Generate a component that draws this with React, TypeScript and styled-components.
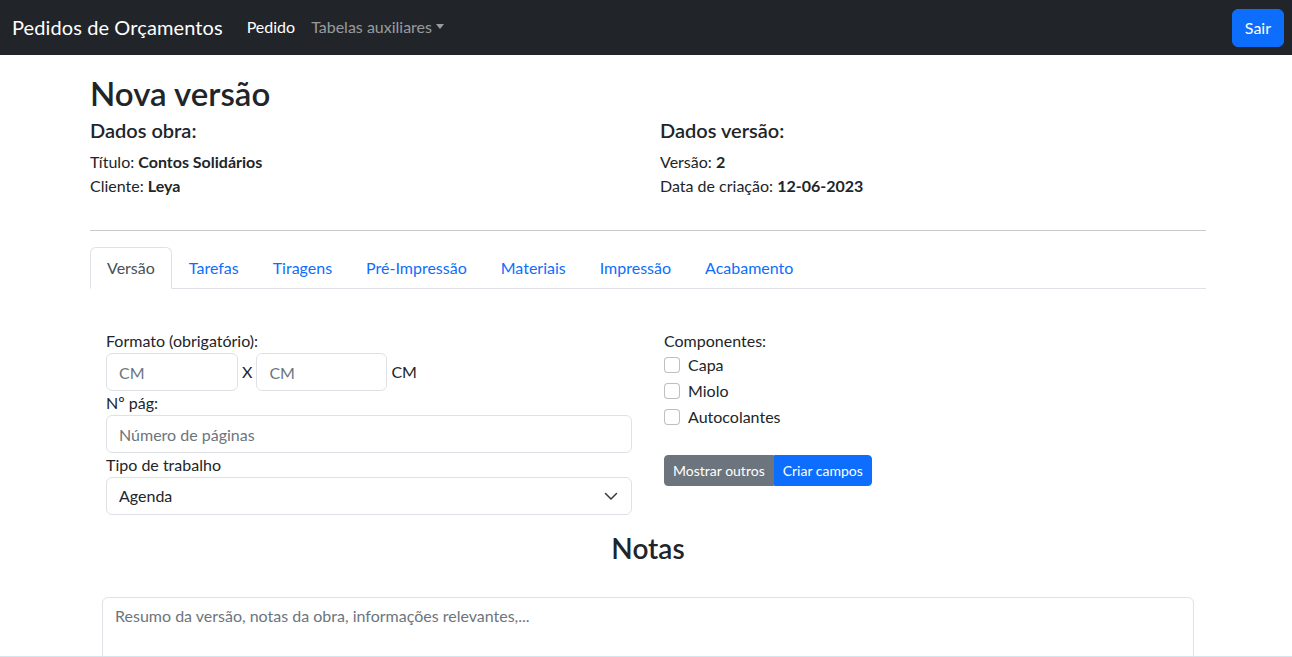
import React from 'react';
import styled, { createGlobalStyle } from 'styled-components';

const GlobalStyle = createGlobalStyle`
  html, body {
    margin: 0;
    padding: 0;
    height: 100%;
    overflow: hidden;
    background: #fff;
  }
  body {
    font-family: Lato, "Open Sans", "Liberation Sans", sans-serif;
    font-size: 16px;
    line-height: 1.5;
    color: #212529;
  }
  * {
    box-sizing: border-box;
  }
`;

const tabs = ['Versão', 'Tarefas', 'Tiragens', 'Pré-Impressão', 'Materiais', 'Impressão', 'Acabamento'];
const componentes = ['Capa', 'Miolo', 'Autocolantes'];

const App: React.FC = () => {
  return (
    <>
      <GlobalStyle />
      {/* barra de navegação */}
      <Navbar>
        <NavLeft>
          <Brand>Pedidos de Orçamentos</Brand>
          <NavLink $active>Pedido</NavLink>
          <NavLink>
            Tabelas auxiliares<Caret />
          </NavLink>
        </NavLeft>
        <Button $variant="primary">Sair</Button>
      </Navbar>

      <Container>
        <Title>Nova versão</Title>

        <InfoRow>
          <div>
            <SubTitle>Dados obra:</SubTitle>
            <InfoLine>Título: <b>Contos Solidários</b></InfoLine>
            <InfoLine>Cliente: <b>Leya</b></InfoLine>
          </div>
          <div>
            <SubTitle>Dados versão:</SubTitle>
            <InfoLine>Versão: <b>2</b></InfoLine>
            <InfoLine>Data de criação: <b>12-06-2023</b></InfoLine>
          </div>
        </InfoRow>

        <Divider />

        <Tabs>
          {tabs.map((t, i) => (
            <Tab key={t} $active={i === 0}>{t}</Tab>
          ))}
        </Tabs>

        <FormRow>
          <FormCol>
            <Label>Formato (obrigatório):</Label>
            <SizeRow>
              <Input placeholder="CM" $width={132} />
              <Unit>X</Unit>
              <Input placeholder="CM" $width={131} />
              <Unit>CM</Unit>
            </SizeRow>
            <Label>Nº pág:</Label>
            <Input placeholder="Número de páginas" />
            <Label>Tipo de trabalho</Label>
            <Select>
              <span>Agenda</span>
              <svg width="16" height="16" viewBox="0 0 16 16">
                <path d="m2.5 5.5 5.5 5.5 5.5-5.5" fill="none" stroke="#343a40" strokeWidth="1.5" strokeLinecap="round" strokeLinejoin="round" />
              </svg>
            </Select>
          </FormCol>

          <FormCol>
            <Label>Componentes:</Label>
            {componentes.map((c) => (
              <Check key={c}>
                <CheckBox />
                <span>{c}</span>
              </Check>
            ))}
            <BtnGroup>
              <Button $variant="secondary" $small>Mostrar outros</Button>
              <Button $variant="primary" $small>Criar campos</Button>
            </BtnGroup>
          </FormCol>
        </FormRow>

        <NotesTitle>Notas</NotesTitle>
        <NotesWrap>
          <TextArea placeholder="Resumo da versão, notas da obra, informações relevantes,..." />
        </NotesWrap>
      </Container>
      <BottomLine />
    </>
  );
};

/* ===================== estilos ===================== */

const Navbar = styled.nav`
  height: 55px;
  background: #212529;
  display: flex;
  align-items: center;
  justify-content: space-between;
  padding: 0 8px 0 12px;
`;

const NavLeft = styled.div`
  display: flex;
  align-items: center;
  margin-top: -1px;
`;

const Brand = styled.span`
  font-size: 20px;
  letter-spacing: 0.1px;
  color: #fff;
  margin-right: 16px;
  padding: 5px 0;
`;

const NavLink = styled.span<{ $active?: boolean }>`
  padding: 8px;
  font-size: 16px;
  color: ${(p) => (p.$active ? '#fff' : 'rgba(255, 255, 255, 0.55)')};
`;

const Caret = styled.span`
  display: inline-block;
  margin-left: 4px;
  vertical-align: 4px;
  border-top: 5px solid rgba(255, 255, 255, 0.55);
  border-left: 4.5px solid transparent;
  border-right: 4.5px solid transparent;
`;

const Button = styled.button<{ $variant: 'primary' | 'secondary'; $small?: boolean }>`
  font-family: inherit;
  font-size: ${(p) => (p.$small ? '14px' : '16px')};
  line-height: 1.5;
  padding: ${(p) => (p.$small ? '4px 8px' : '6px 12px')};
  border-radius: ${(p) => (p.$small ? '4px' : '6px')};
  border: 1px solid ${(p) => (p.$variant === 'primary' ? '#0d6efd' : '#6c757d')};
  background: ${(p) => (p.$variant === 'primary' ? '#0d6efd' : '#6c757d')};
  color: #fff;
  cursor: pointer;
`;

const Container = styled.main`
  width: 1116px;
  margin-left: 90px;
  padding-top: 19px;
`;

const Title = styled.h1`
  font-size: 33px;
  font-weight: 600;
  line-height: 38px;
  margin: 0 0 6px;
`;

const InfoRow = styled.div`
  display: grid;
  grid-template-columns: 570px 1fr;
`;

const SubTitle = styled.h5`
  font-size: 20px;
  font-weight: 600;
  line-height: 1.2;
  margin: 0 0 8px;
`;

const InfoLine = styled.div`
  font-size: 16px;
  line-height: 24px;

  b {
    font-weight: 700;
  }
`;

const Divider = styled.hr`
  margin: 32px 0 16px;
  border: 0;
  border-top: 1px solid #c8c9ca;
`;

const Tabs = styled.div`
  display: flex;
  border-bottom: 1px solid #dee2e6;
`;

const Tab = styled.div<{ $active?: boolean }>`
  padding: 8px 16px;
  margin-bottom: -1px;
  font-size: 16px;
  line-height: 24px;
  border: 1px solid transparent;
  border-color: ${(p) => (p.$active ? '#dee2e6 #dee2e6 #fff' : 'transparent')};
  border-radius: 6px 6px 0 0;
  background: ${(p) => (p.$active ? '#fff' : 'transparent')};
  color: ${(p) => (p.$active ? '#495057' : '#0d6efd')};
`;

const FormRow = styled.div`
  display: grid;
  grid-template-columns: 1fr 1fr;
  padding-top: 40px;
`;

const FormCol = styled.div`
  padding: 0 16px;
  display: flex;
  flex-direction: column;
  align-items: flex-start;
`;

const Label = styled.label`
  font-size: 16px;
  line-height: 24px;
`;

const SizeRow = styled.div`
  display: flex;
  align-items: center;
  gap: 4px;
`;

const Unit = styled.span`
  font-size: 16px;
  line-height: 24px;
`;

const Input = styled.input<{ $width?: number }>`
  width: ${(p) => (p.$width ? `${p.$width}px` : '100%')};
  height: 38px;
  padding: 6px 12px;
  font-family: inherit;
  font-size: 16px;
  color: #212529;
  border: 1px solid #dee2e6;
  border-radius: 6px;
  outline: none;

  &::placeholder {
    color: #6c757d;
  }
`;

const Select = styled.div`
  width: 100%;
  height: 38px;
  padding: 6px 12px;
  border: 1px solid #dee2e6;
  border-radius: 6px;
  display: flex;
  align-items: center;
  justify-content: space-between;
  font-size: 16px;
  line-height: 24px;
`;

const Check = styled.div`
  display: flex;
  align-items: center;
  gap: 8px;
  height: 24px;
  margin-bottom: 2px;
  font-size: 16px;
`;

const CheckBox = styled.span`
  width: 16px;
  height: 16px;
  border: 1px solid rgba(0, 0, 0, 0.25);
  border-radius: 4px;
  background: #fff;
`;

const BtnGroup = styled.div`
  display: flex;
  margin-top: 24px;

  button:first-child {
    border-top-right-radius: 0;
    border-bottom-right-radius: 0;
  }

  button:last-child {
    border-top-left-radius: 0;
    border-bottom-left-radius: 0;
  }
`;

const NotesTitle = styled.h3`
  font-size: 28px;
  font-weight: 600;
  line-height: 1.2;
  text-align: center;
  margin: 17px 0 31px;
`;

const NotesWrap = styled.div`
  padding: 0 12px;
`;

const TextArea = styled.textarea`
  display: block;
  width: 100%;
  height: 110px;
  padding: 6px 12px;
  font-family: inherit;
  font-size: 16px;
  line-height: 24px;
  border: 1px solid #dee2e6;
  border-radius: 6px;
  resize: none;
  outline: none;

  &::placeholder {
    color: #6c757d;
  }
`;

const BottomLine = styled.div`
  position: fixed;
  left: 0;
  right: 0;
  bottom: 0;
  height: 1px;
  background: #d3e6ec;
`;

export default App;
